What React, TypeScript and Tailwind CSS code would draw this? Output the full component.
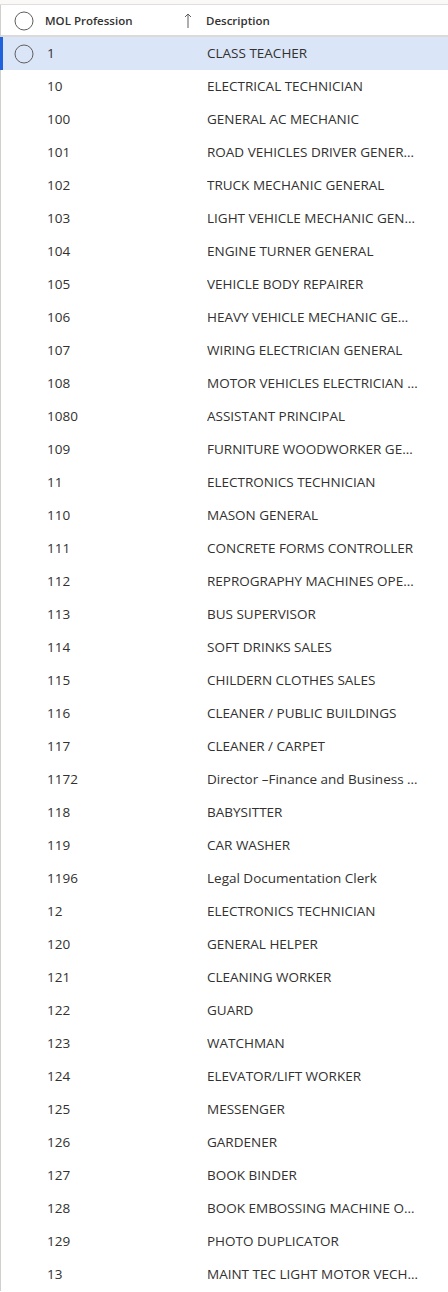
import React from "react";

const rows: [string, string][] = [
  ["1", "CLASS TEACHER"],
  ["10", "ELECTRICAL TECHNICIAN"],
  ["100", "GENERAL AC MECHANIC"],
  ["101", "ROAD VEHICLES DRIVER GENERAL"],
  ["102", "TRUCK MECHANIC GENERAL"],
  ["103", "LIGHT VEHICLE MECHANIC GENERAL"],
  ["104", "ENGINE TURNER GENERAL"],
  ["105", "VEHICLE BODY REPAIRER"],
  ["106", "HEAVY VEHICLE MECHANIC GENERAL"],
  ["107", "WIRING ELECTRICIAN GENERAL"],
  ["108", "MOTOR VEHICLES ELECTRICIAN GENERAL"],
  ["1080", "ASSISTANT PRINCIPAL"],
  ["109", "FURNITURE WOODWORKER GENERAL"],
  ["11", "ELECTRONICS TECHNICIAN"],
  ["110", "MASON GENERAL"],
  ["111", "CONCRETE FORMS CONTROLLER"],
  ["112", "REPROGRAPHY MACHINES OPERATOR"],
  ["113", "BUS SUPERVISOR"],
  ["114", "SOFT DRINKS SALES"],
  ["115", "CHILDERN CLOTHES SALES"],
  ["116", "CLEANER / PUBLIC BUILDINGS"],
  ["117", "CLEANER / CARPET"],
  ["1172", "Director \u2013Finance and Business Intelligence"],
  ["118", "BABYSITTER"],
  ["119", "CAR WASHER"],
  ["1196", "Legal Documentation Clerk"],
  ["12", "ELECTRONICS TECHNICIAN"],
  ["120", "GENERAL HELPER"],
  ["121", "CLEANING WORKER"],
  ["122", "GUARD"],
  ["123", "WATCHMAN"],
  ["124", "ELEVATOR/LIFT WORKER"],
  ["125", "MESSENGER"],
  ["126", "GARDENER"],
  ["127", "BOOK BINDER"],
  ["128", "BOOK EMBOSSING MACHINE OPERATOR"],
  ["129", "PHOTO DUPLICATOR"],
  ["13", "MAINT TEC LIGHT MOTOR VECHICLES"],
];

function Circle() {
  return (
    <svg width="20" height="20" viewBox="0 0 20 20" className="shrink-0">
      <circle cx="10" cy="10" r="9" fill="none" stroke="#605e5c" strokeWidth="1" />
    </svg>
  );
}

export default function App() {
  return (
    <div
      className="w-[448px] min-h-[1292px] bg-white text-[#323130]"
      style={{ fontFamily: '"Open Sans", "Noto Sans", sans-serif' }}
    >
      <div className="h-[4px] bg-[#faf9f8] border-b border-[#e1dfdd] box-content" />
      <div className="border-l border-[#d2d0ce]">
        <div className="flex items-center h-[32px] pt-[2px] border-b-[2px] border-[#dcdad8]">
          <div className="w-[44px] flex justify-center pl-[1px]">
            <Circle />
          </div>
          <div className="w-[161px] flex items-center justify-between pr-[14px] text-[11.5px] font-semibold">
            <span>MOL Profession</span>
            <svg width="8" height="16" viewBox="0 0 8 16">
              <path d="M4 1 V15 M1 4 L4 1 L7 4" fill="none" stroke="#605e5c" strokeWidth="1" />
            </svg>
          </div>
          <div className="text-[11.5px] font-semibold">Description</div>
        </div>
        {rows.map(([code, desc], i) => (
          <div
            key={code}
            className={
              "flex items-center h-[33px] text-[13.5px] " +
              (i === 0 ? "bg-[#dbe5f8] border-l-[3px] border-[#1f62db] -ml-[1px]" : "")
            }
          >
            <div className={(i === 0 ? "w-[42px]" : "w-[44px]") + " flex justify-center"}>
              {i === 0 ? <Circle /> : null}
            </div>
            <div className="w-[162px] pl-[2px]">{code}</div>
            <div className="w-[211px] truncate">{desc}</div>
          </div>
        ))}
      </div>
    </div>
  );
}
